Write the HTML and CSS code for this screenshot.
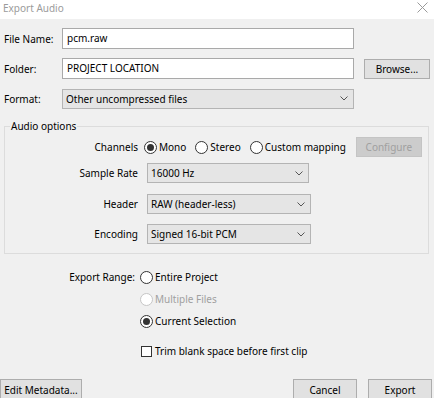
FILE: index.html
```html
<!DOCTYPE html>
<html lang="en">
<head>
  <meta charset="UTF-8">
  <title>Export Audio</title>
  <link rel="stylesheet" href="styles.css">
</head>
<body>
  <div class="titlebar">
    <span class="titulo">Export Audio</span>
    <svg class="cerrar" width="11" height="11" viewBox="0 0 11 11">
      <path d="M0.5 0.5 L10.5 10.5 M10.5 0.5 L0.5 10.5" stroke="#9a9a9a" stroke-width="1" fill="none"/>
    </svg>
  </div>

  <div class="dialogo">
    <div class="fila">
      <span class="etiqueta">File Name:</span>
      <div class="campo">pcm.raw</div>
    </div>
    <div class="fila">
      <span class="etiqueta">Folder:</span>
      <div class="campo">PROJECT LOCATION</div>
      <button class="boton browse">Browse...</button>
    </div>
    <div class="fila">
      <span class="etiqueta">Format:</span>
      <div class="lista formato">
        <span>Other uncompressed files</span>
        <svg width="8" height="5" viewBox="0 0 8 5"><path d="M0.5 0.5 L4 4 L7.5 0.5" stroke="#555" fill="none"/></svg>
      </div>
    </div>

    <fieldset class="grupo">
      <legend>Audio options</legend>
      <div class="opcion canales">
        <span class="etiqueta-grupo">Channels</span>
        <span class="radio marcado"></span><span class="texto-radio">Mono</span>
        <span class="radio"></span><span class="texto-radio">Stereo</span>
        <span class="radio"></span><span class="texto-radio">Custom mapping</span>
        <button class="boton configurar" disabled>Configure</button>
      </div>
      <div class="opcion rate">
        <span class="etiqueta-grupo">Sample Rate</span>
        <div class="lista corta">
          <span>16000 Hz</span>
          <svg width="8" height="5" viewBox="0 0 8 5"><path d="M0.5 0.5 L4 4 L7.5 0.5" stroke="#555" fill="none"/></svg>
        </div>
      </div>
      <div class="opcion header">
        <span class="etiqueta-grupo">Header</span>
        <div class="lista media">
          <span>RAW (header-less)</span>
          <svg width="8" height="5" viewBox="0 0 8 5"><path d="M0.5 0.5 L4 4 L7.5 0.5" stroke="#555" fill="none"/></svg>
        </div>
      </div>
      <div class="opcion encoding">
        <span class="etiqueta-grupo">Encoding</span>
        <div class="lista media">
          <span>Signed 16-bit PCM</span>
          <svg width="8" height="5" viewBox="0 0 8 5"><path d="M0.5 0.5 L4 4 L7.5 0.5" stroke="#555" fill="none"/></svg>
        </div>
      </div>
    </fieldset>

    <div class="rango">
      <span class="etiqueta-rango">Export Range:</span>
      <div class="radios">
        <div class="item"><span class="radio"></span><span class="texto-radio">Entire Project</span></div>
        <div class="item inactivo"><span class="radio"></span><span class="texto-radio">Multiple Files</span></div>
        <div class="item"><span class="radio marcado"></span><span class="texto-radio">Current Selection</span></div>
        <div class="item trim"><span class="check"></span><span class="texto-radio">Trim blank space before first clip</span></div>
      </div>
    </div>
  </div>

  <div class="botones">
    <button class="boton metadata">Edit Metadata...</button>
    <div class="derecha">
      <button class="boton accion">Cancel</button>
      <button class="boton accion">Export</button>
    </div>
  </div>
</body>
</html>
```

FILE: styles.css
```css
body {
  margin: 0;
  padding: 0;
  width: 434px;
  height: 398px;
  overflow: hidden;
  font-family: "Noto Sans", "Open Sans", sans-serif;
  font-size: 10px;
  color: #000000;
  white-space: nowrap;
  background-color: #f0f0f0; /* Gris de ventana */
}

.titlebar {
  height: 19px;
  background-color: #ffffff;
  display: flex;
  justify-content: space-between;
  align-items: flex-start;
}

.titulo {
  color: #9b9b9b;
  margin: 1px 0 0 3px;
  line-height: 15px;
}

.cerrar {
  margin: 2px 6px 0 0;
}

.dialogo {
  padding: 9px 0 0 4px;
}

.fila {
  display: flex;
  align-items: center;
  height: 21px;
  margin-bottom: 9px;
}

.etiqueta {
  width: 58px;
}

.campo {
  width: 292px;
  height: 21px;
  box-sizing: border-box;
  background-color: #ffffff;
  border: 1px solid #a9a9a9;
  padding: 0 4px;
  line-height: 19px;
}

.boton {
  font-family: inherit;
  font-size: 10px;
  color: #000000;
  background-color: #e1e1e1;
  border: 1px solid #adadad;
  padding: 0;
  height: 20px;
  box-sizing: border-box;
}

.browse {
  width: 66px;
  margin-left: 10px;
}

.lista {
  height: 20px;
  box-sizing: border-box;
  background-color: #e5e5e5;
  border: 1px solid #b4b4b4;
  padding: 0 5px 0 3px;
  display: flex;
  justify-content: space-between;
  align-items: center;
}

.formato {
  width: 292px;
}

.corta {
  width: 162px;
}

.media {
  width: 164px;
}

.grupo {
  margin: 8px 5px 0 0;
  padding: 0 0 9px 0;
  border: 1px solid #dcdcdc;
}

.grupo legend {
  margin-left: 5px;
  padding: 0 1px;
  line-height: 16px;
}

.opcion {
  display: flex;
  align-items: center;
  height: 20px;
}

.canales {
  margin-top: 3px;
}

.rate {
  margin-top: 6px;
}

.header {
  margin-top: 11px;
}

.encoding {
  margin-top: 10px;
}

.etiqueta-grupo {
  width: 133px;
  text-align: right;
  margin-right: 9px;
}

.canales .etiqueta-grupo {
  margin-right: 6px;
}

.radio {
  width: 13px;
  height: 13px;
  box-sizing: border-box;
  border: 1px solid #333333;
  border-radius: 50%;
  background-color: #ffffff;
  display: inline-flex;
  align-items: center;
  justify-content: center;
  flex-shrink: 0;
}

.radio.marcado::after {
  content: "";
  width: 7px;
  height: 7px;
  border-radius: 50%;
  background-color: #333333;
}

.texto-radio {
  margin-left: 2px;
  margin-right: 6px;
}

.canales .texto-radio {
  margin-right: 9px;
}

.configurar {
  width: 66px;
  margin-left: 1px;
  background-color: #cccccc;
  border-color: #c4c4c4;
  color: #a0a0a0;
}

.rango {
  display: flex;
  margin-top: 15px;
}

.etiqueta-rango {
  width: 131px;
  text-align: right;
  line-height: 16px;
  margin-right: 5px;
}

.radios {
  display: flex;
  flex-direction: column;
  gap: 6px;
}

.item {
  display: flex;
  align-items: center;
  height: 16px;
}

.inactivo .radio {
  border-color: #c6c6c6;
}

.inactivo .texto-radio {
  color: #a0a0a0;
}

.trim {
  margin-top: 8px;
  margin-left: 1px;
}

.check {
  width: 11px;
  height: 11px;
  box-sizing: border-box;
  border: 1px solid #333333;
  background-color: #ffffff;
}

.trim .texto-radio {
  margin-left: 3px;
}

.botones {
  display: flex;
  justify-content: space-between;
  margin-top: 20px;
}

.metadata {
  width: 82px;
  height: 22px;
}

.derecha {
  display: flex;
  gap: 11px;
  margin-right: 2px;
}

.accion {
  width: 64px;
  height: 22px;
}
```
